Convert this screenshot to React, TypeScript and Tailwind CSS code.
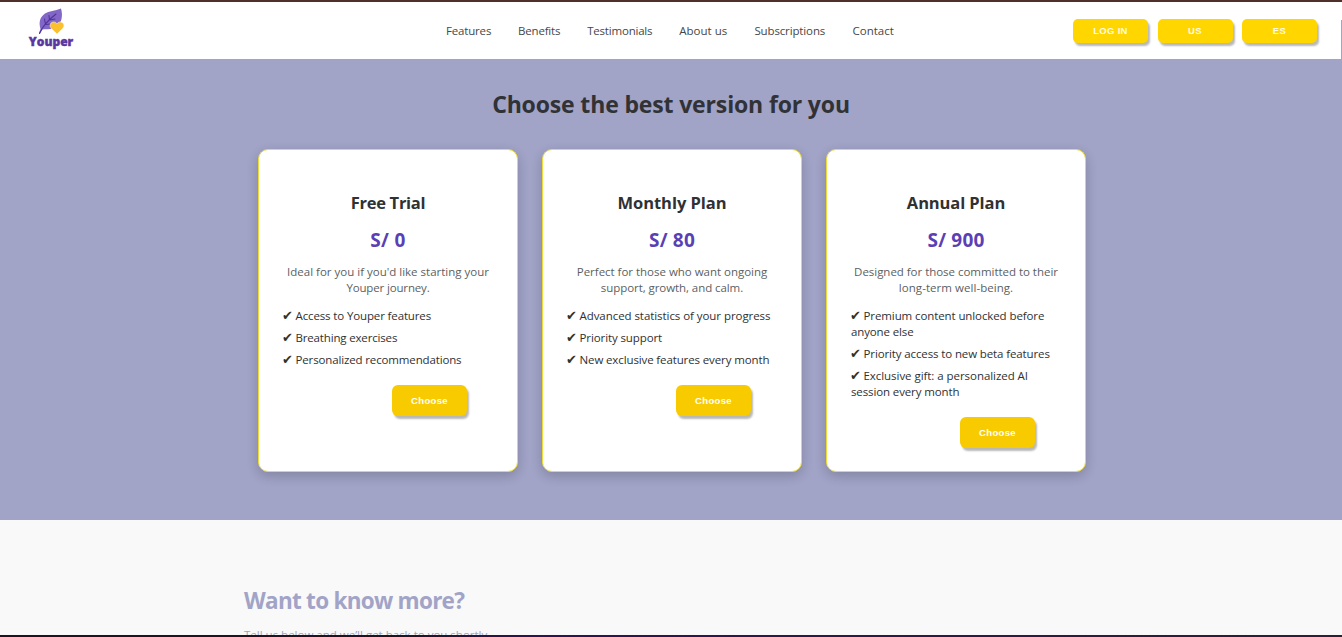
import React from "react";

type Line = { text: string; className: string };
type Plan = {
  name: Line;
  price: Line;
  description: Line[];
  features: Line[][];
};

const navItems = [
  { label: "Features", className: "w-[45px] tracking-[-0.17px]" },
  { label: "Benefits", className: "w-[42px] tracking-[-0.2px]" },
  { label: "Testimonials", className: "w-[65px] tracking-[-0.2px]" },
  { label: "About us", className: "w-[48px]" },
  { label: "Subscriptions", className: "w-[71px] tracking-[-0.13px]" },
  { label: "Contact", className: "w-[42px]" },
];

const plans: Plan[] = [
  {
    name: { text: "Free Trial", className: "tracking-[-0.28px]" },
    price: { text: "S/ 0", className: "tracking-[0.4px]" },
    description: [
      { text: "Ideal for you if you'd like starting your", className: "tracking-normal" },
      { text: "Youper journey.", className: "tracking-[-0.15px]" },
    ],
    features: [
      [{ text: "Access to Youper features", className: "tracking-[-0.13px]" }],
      [{ text: "Breathing exercises", className: "tracking-[-0.16px]" }],
      [{ text: "Personalized recommendations", className: "tracking-[-0.14px]" }],
    ],
  },
  {
    name: { text: "Monthly Plan", className: "tracking-[-0.04px]" },
    price: { text: "S/ 80", className: "tracking-[0.2px]" },
    description: [
      { text: "Perfect for those who want ongoing", className: "tracking-[-0.02px]" },
      { text: "support, growth, and calm.", className: "tracking-[-0.07px]" },
    ],
    features: [
      [{ text: "Advanced statistics of your progress", className: "tracking-[-0.06px]" }],
      [{ text: "Priority support", className: "tracking-[-0.1px]" }],
      [{ text: "New exclusive features every month", className: "tracking-[-0.12px]" }],
    ],
  },
  {
    name: { text: "Annual Plan", className: "tracking-[-0.1px]" },
    price: { text: "S/ 900", className: "tracking-[0.2px]" },
    description: [
      { text: "Designed for those committed to their", className: "tracking-[-0.03px]" },
      { text: "long-term well-being.", className: "tracking-[0.05px]" },
    ],
    features: [
      [
        { text: "Premium content unlocked before", className: "tracking-[-0.1px]" },
        { text: "anyone else", className: "tracking-[-0.13px]" },
      ],
      [{ text: "Priority access to new beta features", className: "tracking-[-0.12px]" }],
      [
        { text: "Exclusive gift: a personalized AI", className: "tracking-[-0.05px]" },
        { text: "session every month", className: "tracking-[-0.12px]" },
      ],
    ],
  },
];

function Logo() {
  return (
    <div className="flex w-[46px] flex-col items-center">
      <svg width="27" height="27" viewBox="0 0 27 27" className="block">
        <path d="M2.500 21C0.500 14 2 9 7 5.500C11 3 17 3 23 0.500C25 7 24 14 19.500 18C15 22 9 21 4.500 21.500L2 25.500L1 25Z" fill="#8367c7" />
        <path d="M1.500 25.500C4 19 9 13 18 6M7.500 16.500L6.500 11M7.500 16.500L13 16M11.500 12L11 7.500M11.500 12L17 11" fill="none" stroke="#50349b" strokeWidth="1.100" strokeLinecap="round" />
        <path d="M19 26L13.300 20.500C10.800 17.500 12.300 14 15.800 14C17.400 14 18.400 14.900 19 15.800C19.600 14.900 20.600 14 22.200 14C25.700 14 27.200 17.500 24.700 20.500Z" fill="#fbc02d" stroke="#fff" strokeWidth="0.500" />
      </svg>
      <span className="font-['Open_Sans',sans-serif] text-[12px] leading-[14px] font-extrabold text-[#5b35a0] [-webkit-text-stroke:0.400px_#5b35a0]">
        Youper
      </span>
    </div>
  );
}

function HeaderButton({ label }: { label: string }) {
  return (
    <button className="h-[24px] w-[75px] rounded-[5px] bg-[#ffd600] pb-[1px] font-['Liberation_Sans',sans-serif] text-[9.5px] leading-[12px] font-bold tracking-[0.3px] text-[#fffbe0] shadow-[2px_3px_2px_rgba(0,0,0,0.28)]">
      {label}
    </button>
  );
}

function PlanCard({ plan }: { plan: Plan }) {
  return (
    <article className="flex h-[323px] w-[260px] flex-col rounded-[10px] border border-[#eedb38] bg-white px-[24px] pt-[41px] shadow-[0_4px_12px_rgba(0,0,0,0.19)]">
      <h2 className="text-center text-[16.5px] leading-[24px] font-bold tracking-[-0.25px] whitespace-nowrap text-[#2f3133]">
        <span className={plan.name.className}>{plan.name.text}</span>
      </h2>
      <p className="mt-[13px] text-center text-[19px] leading-[24px] font-bold text-[#5a3fb5]">
        <span className={plan.price.className}>{plan.price.text}</span>
      </p>
      <div className="mt-[12px] flex flex-col items-center text-[11.5px] leading-[16px] whitespace-nowrap text-[#5c5f62]">
        {plan.description.map((line) => (
          <span key={line.text} className={line.className}>{line.text}</span>
        ))}
      </div>
      <ul className="mt-[12px] flex flex-col gap-[6px] text-[11.5px] leading-[16px] whitespace-nowrap text-[#2f3133]">
        {plan.features.map((lines) => (
          <li key={lines[0].text} className="flex flex-col">
            <span className="flex h-[16px]">
              <span className="ml-[-1px] w-[13.5px] font-['DejaVu_Sans',sans-serif] text-[13px]">✔</span>
              <span className={lines[0].className}>{lines[0].text}</span>
            </span>
            {lines.slice(1).map((line) => (
              <span key={line.text} className={line.className}>{line.text}</span>
            ))}
          </li>
        ))}
      </ul>
      <button className="mt-[17px] ml-[109px] h-[31px] w-[75px] shrink-0 rounded-[6px] bg-[#f7cb00] font-['Liberation_Sans',sans-serif] text-[9.5px] leading-[12px] font-bold tracking-[0.35px] text-white shadow-[2px_3px_2px_rgba(0,0,0,0.28)]">
        Choose
      </button>
    </article>
  );
}

export default function App() {
  return (
    <div className="flex h-[637px] w-full flex-col overflow-hidden bg-[#f9f9f9] font-['Open_Sans','Noto_Sans',sans-serif]">
      <div className="h-[2px] shrink-0 bg-[#4e302c]" />
      <header className="flex h-[57px] w-full shrink-0 items-start bg-white">
        <div className="w-[446px] shrink-0 pt-[6px] pl-[28px]">
          <Logo />
        </div>
        <nav className="flex gap-[27.1px] pt-[20px] text-[11.5px] leading-[18px] whitespace-nowrap text-[#45474a]">
          {navItems.map((item) => (
            <a key={item.label} className={item.className}>{item.label}</a>
          ))}
        </nav>
        <div className="mr-[24px] ml-auto flex gap-[9.5px] pt-[17px]">
          <HeaderButton label="LOG IN" />
          <HeaderButton label="US" />
          <HeaderButton label="ES" />
        </div>
        <div className="mt-[18px] h-[39px] w-px bg-[#a1a3c7]" />
      </header>
      <section className="h-[461px] w-full shrink-0 bg-[#a1a3c7] pt-[28px]">
        <h1 className="text-center text-[23px] leading-[35px] font-bold text-[#303235]">
          <span className="tracking-[-0.15px]">Choose the best version for you</span>
        </h1>
        <div className="mt-[27px] flex justify-center gap-[24px] pl-[2px]">
          {plans.map((plan) => (
            <PlanCard key={plan.name.text} plan={plan} />
          ))}
        </div>
      </section>
      <section className="h-[115px] overflow-hidden pt-[63px] pl-[244px] whitespace-nowrap">
        <h2 className="text-[22.5px] leading-[36px] font-bold text-[#a1a3c7]">
          <span className="tracking-[-0.73px]">Want to know more?</span>
        </h2>
        <p className="mt-[7px] text-[11.5px] leading-[18px] text-[#a1a3c0]">
          Tell us below and we’ll get back to you shortly.
        </p>
      </section>
      <div className="h-[2px] shrink-0 bg-linear-to-r from-[#1c1424] from-30% via-[#2c1256] via-40% to-[#2a2036]" />
    </div>
  );
}
